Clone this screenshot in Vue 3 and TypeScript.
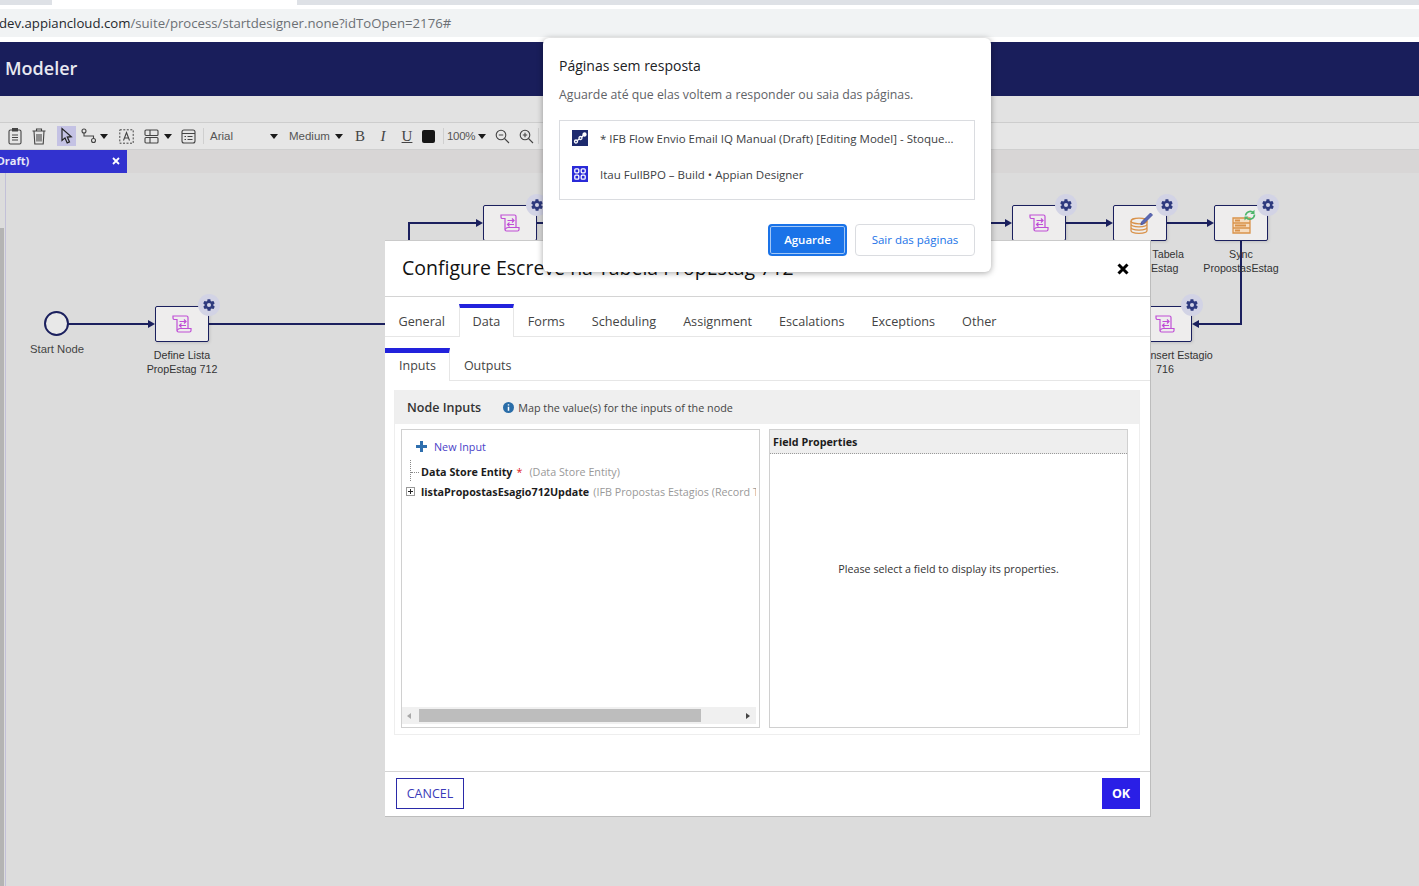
<template>
  <div class="page">
    <div class="tabstrip"><div class="active-tab"></div></div>
    <div class="urlbar">
      <span class="url"><span class="host">dev.appiancloud.com</span>/suite/process/startdesigner.none?idToOpen=2176#</span>
    </div>

    <header class="appbar"><span>Modeler</span></header>
    <div class="band"></div>

    <div class="toolbar">
      <span class="tool t-clip">
        <svg width="16" height="18" viewBox="0 0 16 18"><rect x="2" y="3" width="12" height="14" rx="1.5" class="ic"/><rect x="5" y="1" width="6" height="3.5" fill="#444"/><path d="M5 8h6M5 10.5h6M5 13h6" class="ic"/></svg>
      </span>
      <span class="tool t-trash">
        <svg width="16" height="18" viewBox="0 0 16 18"><path d="M1.5 4h13M5.5 4V2h5v2M3 4l.8 13h8.4L13 4M6 7v7.5M8 7v7.5M10 7v7.5" class="ic"/></svg>
      </span>
      <span class="tool t-arrow">
        <svg width="14" height="18" viewBox="0 0 14 18"><path d="M2 1.5v12l3-2.6 2.2 5 2.3-1-2.2-4.8 4-.4z" fill="none" stroke="#222" stroke-width="1.2"/></svg>
      </span>
      <span class="tool t-conn">
        <svg width="16" height="16" viewBox="0 0 16 16"><circle cx="3" cy="3" r="2" class="ic"/><circle cx="12.5" cy="12.5" r="2" class="ic"/><path d="M3 5v3h9.500v2.500" class="ic"/></svg>
      </span>
      <span class="caret t-c1"></span>
      <span class="tool t-text">
        <svg width="15" height="15" viewBox="0 0 15 15"><rect x=".8" y=".8" width="13.400" height="13.400" fill="none" stroke="#444" stroke-dasharray="2 1.500"/><path d="M4.500 11.500 7.500 3.500l3 8M5.500 9h4" class="ic"/></svg>
      </span>
      <span class="tool t-layout">
        <svg width="15" height="15" viewBox="0 0 15 15"><rect x="1" y="1" width="13" height="5.500" rx="1" class="ic"/><rect x="1" y="8.500" width="13" height="5.500" rx="1" class="ic"/><path d="M6 1v5.500M6 8.500V14" class="ic"/></svg>
      </span>
      <span class="caret t-c2"></span>
      <span class="tool t-list">
        <svg width="15" height="15" viewBox="0 0 15 15"><rect x="1" y="1" width="13" height="13" rx="2" class="ic"/><path d="M1 4.500h13M3.500 7.500h1.500M6.500 7.500h5M3.500 10.500h1.500M6.500 10.500h5" class="ic"/></svg>
      </span>
      <span class="sep s1"></span>
      <span class="label font-name">Arial</span>
      <span class="caret t-c3"></span>
      <span class="label font-size">Medium</span>
      <span class="caret t-c4"></span>
      <span class="fmt f-b">B</span>
      <span class="fmt f-i">I</span>
      <span class="fmt f-u">U</span>
      <span class="swatch"></span>
      <span class="sep s2"></span>
      <span class="label zoom">100%</span>
      <span class="caret t-c5"></span>
      <span class="tool t-zo">
        <svg width="15" height="15" viewBox="0 0 15 15"><circle cx="6" cy="6" r="4.800" class="ic"/><path d="M3.800 6h4.400M9.500 9.500l4.500 4.500" class="ic"/></svg>
      </span>
      <span class="tool t-zi">
        <svg width="15" height="15" viewBox="0 0 15 15"><circle cx="6" cy="6" r="4.800" class="ic"/><path d="M3.800 6h4.400M6 3.800v4.400M9.500 9.500l4.500 4.500" class="ic"/></svg>
      </span>
      <span class="sep s3"></span>
    </div>

    <div class="docbar">
      <div class="doctab">
        <span class="doctab-name">(Draft)</span>
        <svg class="doctab-x" width="8" height="8" viewBox="0 0 8 8"><path d="M1 1l6 6M7 1 1 7" stroke="#fff" stroke-width="1.800"/></svg>
      </div>
    </div>

    <main class="canvas">
      <div class="gutter"></div>
      <div class="gutter-thumb"></div>

      <svg class="wires" width="1419" height="713" viewBox="0 173 1419 713">
        <g fill="none" stroke="#1b205e" stroke-width="2">
          <path d="M68 324H150"/>
          <path d="M209 324H385"/>
          <path d="M409 240V223H478"/>
          <path d="M537 223H1007"/>
          <path d="M1066 223H1108"/>
          <path d="M1167 223H1209"/>
          <path d="M1241 241V324H1198"/>
        </g>
        <g fill="#1b205e">
          <path d="M155 324l-7-4v8z"/>
          <path d="M483 223l-7-4v8z"/>
          <path d="M1012 223l-7-4v8z"/>
          <path d="M1113 223l-7-4v8z"/>
          <path d="M1214 223l-7-4v8z"/>
          <path d="M1192 324l7-4v8z"/>
        </g>
      </svg>

      <div class="start" :style="place(44, 311)"></div>
      <div class="node-label start-label" :style="place(17, 342)">Start Node</div>

      <div v-for="n in nodes" :key="n.x + '-' + n.y" class="node" :style="place(n.x, n.y)">
        <svg v-if="n.icon === 'script'" width="20" height="18" viewBox="0 0 20 18" fill="none" stroke="#c04fd6" stroke-width="1.200">
          <path d="M1 1h13.500A1.500 1.500 0 0 1 16 2.500V13.500h3v2a1.500 1.500 0 0 1-1.500 1.500H6.500A1.500 1.500 0 0 1 5 15.500V4.500H2A1.500 1.500 0 0 1 1 3z"/>
          <path d="M5 15.500c1-1.500 2-2 3-2h11M7.500 6.500h6.500M12 4.500l2 2-2 2M14 10.500H7.500M9.500 8.500l-2 2 2 2"/>
        </svg>
        <svg v-else-if="n.icon === 'db'" class="db-icon" width="23" height="23" viewBox="0 0 23 23" fill="none" stroke="#d9924a" stroke-width="1.300">
          <ellipse cx="9" cy="10" rx="8" ry="2.800"/>
          <path d="M1 10v9.500c0 1.600 3.600 2.800 8 2.800s8-1.200 8-2.800V10M1 13c0 1.600 3.600 2.800 8 2.800s8-1.200 8-2.800M1 16.300c0 1.600 3.600 2.800 8 2.800s8-1.200 8-2.800"/>
          <path d="M11.500 11l9-9 2 2-9 9-2.700.7z" fill="#5a68b4" stroke="#3f4c98" stroke-width=".8"/>
        </svg>
        <svg v-else class="sync-icon" width="24" height="25" viewBox="0 0 24 25" fill="none">
          <path d="M1 9h17v5H1zM1 14h17v5H1zM1 19h17v5H1z" fill="#f5dcc0" stroke="#d9924a" stroke-width="1.300"/>
          <path d="M3 11.500h5M3 16.500h11M3 21.500h5" stroke="#d9924a" stroke-width="2"/>
          <path d="M13.500 6.500a4.800 4.800 0 0 1 8-2.800M22.500 5.500a4.800 4.800 0 0 1-8 3.500" stroke="#4db56a" stroke-width="1.600"/>
          <path d="M22.500.8v4.200h-4.200zM12.500 11.500V7.500h4z" fill="#4db56a"/>
        </svg>
        <span class="gear" :class="{ upper: n.y < 300 }">
          <svg width="14" height="14" viewBox="0 0 24 24"><path fill="#2e3a7e" d="M19.400 13c.1-.3.100-.7.100-1s0-.7-.1-1l2.100-1.600c.2-.1.2-.4.100-.6l-2-3.500c-.1-.2-.4-.3-.6-.2l-2.500 1c-.5-.4-1.100-.7-1.700-1l-.4-2.600c0-.3-.2-.5-.5-.5h-4c-.3 0-.5.200-.5.500l-.4 2.600c-.6.300-1.200.6-1.700 1l-2.500-1c-.2-.1-.5 0-.6.200l-2 3.500c-.1.200-.1.500.1.600L4.600 11c-.1.300-.1.700-.1 1s0 .7.100 1l-2.100 1.600c-.2.100-.2.400-.1.600l2 3.500c.1.200.4.300.6.200l2.500-1c.5.400 1.100.7 1.700 1l.4 2.600c0 .3.200.5.500.5h4c.3 0 .5-.2.500-.5l.4-2.600c.6-.3 1.200-.6 1.700-1l2.500 1c.2.100.5 0 .6-.2l2-3.500c.1-.2.100-.5-.1-.6zM12 15.500a3.500 3.500 0 1 1 0-7 3.500 3.500 0 0 1 0 7z"/></svg>
        </span>
        <div class="node-label">
          <div v-for="line in n.label" :key="line">{{ line }}</div>
        </div>
      </div>
    </main>

    <!-- process node properties -->
    <section class="dialog">
      <div class="dialog-head">
        <h1>Configure Escreve na Tabela PropEstag 712</h1>
        <svg width="12" height="12" viewBox="0 0 12 12"><path d="M1.500 1.500l9 9M10.500 1.500l-9 9" stroke="#000" stroke-width="3"/></svg>
      </div>

      <nav class="tabs">
        <span v-for="t in tabs" :key="t" class="tab" :class="{ on: t === 'Data' }">{{ t }}</span>
      </nav>
      <nav class="tabs sub">
        <span class="tab on">Inputs</span>
        <span class="tab">Outputs</span>
      </nav>

      <div class="panel">
        <div class="panel-head">
          <strong>Node Inputs</strong>
          <svg width="11" height="11" viewBox="0 0 11 11"><circle cx="5.500" cy="5.500" r="5.500" fill="#2a6da8"/><path d="M5.500 2.200v1.400M5.500 4.800v4" stroke="#fff" stroke-width="1.500"/></svg>
          <span>Map the value(s) for the inputs of the node</span>
        </div>
        <div class="panel-body">
          <div class="tree-box">
            <div class="tree">
              <div class="new-input">
                <svg width="11" height="11" viewBox="0 0 11 11"><path d="M5.500 0v11M0 5.500h11" stroke="#2f6fae" stroke-width="3"/></svg>
                <span>New Input</span>
              </div>
              <div class="row first">
                <b>Data Store Entity</b><i class="req">*</i><span class="type gap">(Data Store Entity)</span>
              </div>
              <div class="row second">
                <span class="expander"></span>
                <b>listaPropostasEsagio712Update</b><span class="type">(IFB Propostas Estagios (Record Type))</span>
              </div>
            </div>
            <div class="hscroll">
              <span class="arrow left"></span>
              <span class="thumb"></span>
              <span class="arrow right"></span>
            </div>
          </div>

          <div class="props-box">
            <div class="props-head">Field Properties</div>
            <div class="props-empty">Please select a field to display its properties.</div>
          </div>
        </div>
      </div>

      <footer class="dialog-foot">
        <button class="btn cancel">CANCEL</button>
        <button class="btn ok">OK</button>
      </footer>
    </section>

    <!-- browser's own unresponsive pages prompt -->
    <aside class="prompt">
      <h2>Páginas sem resposta</h2>
      <p>Aguarde até que elas voltem a responder ou saia das páginas.</p>
      <ul>
        <li>
          <span class="fav navy">
            <svg width="16" height="16" viewBox="0 0 16 16" fill="none" stroke="#fff" stroke-width="1.300"><circle cx="4" cy="11.500" r="1.500"/><circle cx="8.500" cy="8" r="1.500"/><circle cx="12.500" cy="4.500" r="1.500" fill="#fff"/><path d="M5.300 10.500l2-1.500M9.800 7l1.500-1.500"/></svg>
          </span>
          * IFB Flow Envio Email IQ Manual (Draft) [Editing Model] - Stoque...
        </li>
        <li>
          <span class="fav blue">
            <svg width="16" height="16" viewBox="0 0 16 16" fill="none" stroke="#fff" stroke-width="1.300"><rect x="2.800" y="2.800" width="4" height="4" rx="1"/><rect x="9.200" y="2.800" width="4" height="4" rx="1"/><rect x="2.800" y="9.200" width="4" height="4" rx="1"/><rect x="9.200" y="9.200" width="4" height="4" rx="1"/></svg>
          </span>
          Itau FullBPO – Build • Appian Designer
        </li>
      </ul>
      <div class="prompt-actions">
        <button class="wait">Aguarde</button>
        <button class="leave">Sair das páginas</button>
      </div>
    </aside>
  </div>
</template>

<script setup lang="ts">
interface FlowNode {
  x: number
  y: number
  icon: 'script' | 'db' | 'sync'
  label: string[]
}

// coordinates are page pixels, the canvas starts under the document bar
const CANVAS_TOP = 173

const nodes: FlowNode[] = [
  { x: 155, y: 306, icon: 'script', label: ['Define Lista', 'PropEstag 712'] },
  { x: 483, y: 205, icon: 'script', label: [] },
  { x: 1012, y: 205, icon: 'script', label: [] },
  { x: 1113, y: 205, icon: 'db', label: ['Escreve na Tabela', '7120 PropEstag'] },
  { x: 1214, y: 205, icon: 'sync', label: ['Sync', 'PropostasEstag'] },
  { x: 1138, y: 306, icon: 'script', label: ['Script Insert Estagio', '716'] }
]

const tabs = ['General', 'Data', 'Forms', 'Scheduling', 'Assignment', 'Escalations', 'Exceptions', 'Other']

const place = (x: number, y: number) => ({ left: `${x}px`, top: `${y - CANVAS_TOP}px` })
</script>

<style>
html, body {
  margin: 0;
  background: #dcdcdc;
}
</style>

<style scoped>
.page {
  position: relative;
  width: 1419px;
  height: 886px;
  overflow: hidden;
  display: flex;
  flex-direction: column;
  background: #fff;
  font-family: "Open Sans", "Noto Sans", sans-serif;
  color: #333;
}

/* Browser chrome */
.tabstrip {
  height: 5px;
  background: #dee1e6;
  padding-left: 52px;
  flex-shrink: 0;
}
.active-tab {
  width: 245px;
  height: 5px;
  background: #fff;
}
.urlbar {
  height: 28px;
  margin-top: 4px;
  background: #f1f3f4;
  display: flex;
  align-items: center;
  flex-shrink: 0;
}
.url {
  margin-left: -1px;
  font-size: 13.2px;
  color: #6c7074;
  white-space: nowrap;
}
.host {
  color: #25282c;
}

.appbar {
  height: 54px;
  box-sizing: border-box;
  margin-top: 5px;
  background: #191e5b;
  color: #e8e8f0;
  font-size: 18px;
  font-weight: 600;
  padding: 0 0 2px 5px;
  display: flex;
  align-items: center;
  flex-shrink: 0;
}
.band {
  height: 26px;
  background: #e2e2e2;
  flex-shrink: 0;
}

/* Toolbar */
.toolbar {
  height: 26px;
  background: #e6e6e6;
  border-top: 1px solid #cdcdcd;
  border-bottom: 1px solid #cfcfcf;
  display: flex;
  align-items: center;
  flex-shrink: 0;
}
.ic {
  fill: none;
  stroke: #444;
  stroke-width: 1.1;
}
.tool {
  display: flex;
  align-items: center;
  justify-content: center;
}
.t-clip { margin-left: 7px; }
.t-trash { margin-left: 8px; }
.t-arrow {
  margin-left: 10px;
  width: 19px;
  height: 20px;
  background: #c4c2e4;
}
.t-conn { margin-left: 5px; }
.caret {
  width: 0;
  height: 0;
  border-left: 4.500px solid transparent;
  border-right: 4.500px solid transparent;
  border-top: 5px solid #1a1a1a;
}
.t-c1 { margin-left: 3px; }
.t-text { margin-left: 11px; }
.t-layout { margin-left: 10px; }
.t-c2 { margin-left: 5px; }
.t-list { margin-left: 9px; }
.sep {
  width: 1px;
  height: 16px;
  background: #cfcfcf;
}
.s1 { margin-left: 7px; }
.label {
  font-family: "Liberation Sans", Arial, sans-serif;
  font-size: 11.500px;
  color: #555;
}
.font-name { margin-left: 6px; width: 60px; }
.t-c3 { margin-right: 11px; }
.font-size { width: 46px; }
.fmt {
  font-family: "Liberation Serif", serif;
  font-size: 15px;
  color: #444;
  width: 12px;
  text-align: center;
}
.f-b { margin-left: 11px; }
.f-i { margin-left: 11px; font-style: italic; }
.f-u { margin-left: 12px; text-decoration: underline; }
.swatch {
  width: 13px;
  height: 13px;
  margin-left: 9px;
  border-radius: 2px;
  background: #161616;
}
.s2 { margin-left: 8px; }
.zoom { margin-left: 3px; width: 30px; letter-spacing: -.3px; }
.t-c5 { margin-left: 1px; }
.t-zo { margin-left: 9px; }
.t-zi { margin-left: 9px; }
.s3 { margin-left: 4px; }

/* Document tab */
.docbar {
  height: 23px;
  background: #d8d6d6;
  flex-shrink: 0;
}
.doctab {
  width: 127px;
  height: 23px;
  box-sizing: border-box;
  padding-bottom: 2px;
  background: #3232cf;
  color: #e8e8f8;
  display: flex;
  align-items: center;
  overflow: hidden;
}
.doctab-name {
  margin-left: -7px;
  font-size: 11px;
  font-weight: 700;
}
.doctab-x {
  margin-left: auto;
  margin-right: 7px;
}

/* Canvas */
.canvas {
  position: relative;
  flex: 1;
  background: #dcdcdc;
}
.gutter {
  position: absolute;
  left: 5px;
  top: 0;
  bottom: 0;
  width: 1px;
  background: #c2c0d8;
}
.gutter-thumb {
  position: absolute;
  left: 0;
  top: 55px;
  bottom: 0;
  width: 4px;
  background: #b4b4b4;
}
.wires {
  position: absolute;
  left: 0;
  top: 0;
}
.start {
  position: absolute;
  width: 21px;
  height: 21px;
  border: 2px solid #1b205e;
  border-radius: 50%;
  background: #e8e8e8;
}
.node {
  position: absolute;
  width: 54px;
  height: 36px;
  box-sizing: border-box;
  border: 1.500px solid #1b205e;
  border-radius: 2px;
  background: #eeeded;
  display: flex;
  align-items: center;
  justify-content: center;
  box-shadow: 1px 1px 3px rgba(0, 0, 0, .12);
}
.db-icon {
  margin-top: -2px;
  margin-left: 3px;
}
.sync-icon {
  margin-top: -4px;
  margin-left: 6px;
}
.gear {
  position: absolute;
  right: -12px;
  top: -13px;
  width: 22px;
  height: 22px;
  border-radius: 50%;
  background: #d2d3e5;
  display: flex;
  align-items: center;
  justify-content: center;
}
.gear.upper {
  top: -12px;
}
.node-label {
  position: absolute;
  top: 41px;
  left: -40px;
  right: -40px;
  font-family: "Liberation Sans", Arial, sans-serif;
  font-size: 10.700px;
  line-height: 14px;
  text-align: center;
  color: #333;
  white-space: nowrap;
}
.start-label {
  top: 0;
  left: auto;
  right: auto;
  width: 80px;
  font-size: 11.300px;
  color: #444;
}

/* Node properties dialog */
.dialog {
  position: absolute;
  left: 385px;
  top: 240px;
  width: 766px;
  height: 577px;
  box-sizing: border-box;
  background: #fff;
  border-top: 1px solid #cacaca;
  border-right: 1px solid #bdbdbd;
  border-bottom: 1px solid #bdbdbd;
  display: flex;
  flex-direction: column;
}
.dialog-head {
  height: 56px;
  box-sizing: border-box;
  border-bottom: 1px solid #d4d4d4;
  display: flex;
  align-items: center;
  justify-content: space-between;
  padding: 0 21px 1px 17px;
  flex-shrink: 0;
}
.dialog-head h1 {
  margin: 0 0 1px;
  font-size: 19.500px;
  font-weight: 400;
  color: #111;
  white-space: nowrap;
}
.dialog-head svg {
  margin-top: 2px;
}
.tabs {
  display: flex;
  height: 33px;
  margin-top: 7px;
  box-sizing: border-box;
  border-bottom: 1px solid #e6e6e6;
  flex-shrink: 0;
  font-size: 12.650px;
  color: #444;
}
.tab {
  padding: 1px 13.500px 0;
  line-height: 24px;
  height: 32px;
  box-sizing: border-box;
  border-top: 4px solid transparent;
  white-space: nowrap;
}
.tab.on {
  height: 33px;
  background: #fff;
  border-top-color: #2222dc;
  border-left: 1px solid #e6e6e6;
  border-right: 1px solid #e6e6e6;
  padding: 1px 13px 0;
}
.sub {
  margin-top: 11px;
  font-size: 12.500px;
}
.sub .tab.on {
  border-top-width: 5px;
  border-left: 0;
  padding: 1px 13.500px 0 14px;
}
.sub .tab:not(.on) {
  padding-top: 2px;
}
.panel {
  margin: 9px 10px 0 9px;
  height: 345px;
  box-sizing: border-box;
  border: 1px solid #eee;
  border-top: 0;
  display: flex;
  flex-direction: column;
}
.panel-head {
  height: 34px;
  background: #efefef;
  display: flex;
  align-items: center;
  font-size: 10.800px;
  color: #444;
  padding-left: 12px;
  flex-shrink: 0;
}
.panel-head strong {
  font-size: 12.500px;
  font-weight: 600;
  color: #333;
  margin-right: 22px;
}
.panel-head svg {
  margin-right: 4px;
}
.panel-body {
  display: flex;
  gap: 9px;
  padding: 5px 11px 0 6px;
}
.tree-box,
.props-box {
  width: 359px;
  height: 299px;
  box-sizing: border-box;
  border: 1px solid #d0d0d0;
  display: flex;
  flex-direction: column;
  font-size: 10.750px;
}
.tree {
  flex: 1;
  overflow: hidden;
  position: relative;
  padding-top: 9px;
  margin-right: 3px;
}
.new-input {
  display: flex;
  align-items: center;
  gap: 7px;
  padding-left: 14px;
  height: 15px;
  color: #4a3fc8;
}
.row {
  position: relative;
  padding-left: 19px;
  height: 20px;
  line-height: 20px;
  white-space: nowrap;
}
.row.first {
  margin-top: 8px;
}
.row b {
  font-weight: 700;
  color: #1c1c1c;
}
.row.first::before {
  content: "";
  position: absolute;
  left: 8px;
  top: -2px;
  height: 21px;
  border-left: 1px dotted #888;
}
.row.first::after {
  content: "";
  position: absolute;
  left: 9px;
  top: 10px;
  width: 8px;
  border-top: 1px dotted #888;
}
.req {
  color: #e02020;
  font-style: normal;
  margin-left: 4px;
}
.type {
  color: #999;
  margin-left: 4px;
}
.type.gap {
  margin-left: 7px;
}
.expander {
  position: absolute;
  left: 4px;
  top: 5px;
  width: 9px;
  height: 9px;
  box-sizing: border-box;
  border: 1px solid #999;
  background:
    linear-gradient(#222, #222) center / 5px 1px no-repeat,
    linear-gradient(#222, #222) center / 1px 5px no-repeat,
    #fff;
}
.hscroll {
  height: 17px;
  margin: 0 3px 3px 0;
  background: #f0f0f0;
  display: flex;
  align-items: center;
  flex-shrink: 0;
}
.thumb {
  width: 282px;
  height: 13px;
  margin-left: 8px;
  background: #bdbdbd;
}
.arrow {
  width: 0;
  height: 0;
  border-top: 3.500px solid transparent;
  border-bottom: 3.500px solid transparent;
}
.arrow.left {
  margin-left: 5px;
  border-right: 4px solid #a8a8a8;
}
.arrow.right {
  margin-left: 45px;
  border-left: 4px solid #444;
}
.props-head {
  height: 23px;
  line-height: 24px;
  padding-left: 3px;
  background: #eee;
  border-bottom: 1px dotted #999;
  font-weight: 700;
  color: #1c1c1c;
  flex-shrink: 0;
}
.props-empty {
  flex: 1;
  display: flex;
  align-items: center;
  justify-content: center;
  padding-bottom: 43px;
  color: #333;
}
.dialog-foot {
  margin-top: auto;
  height: 45px;
  box-sizing: border-box;
  border-top: 1px solid #d4d4d4;
  display: flex;
  justify-content: space-between;
  padding: 6px 10px 0 11px;
  flex-shrink: 0;
}
.btn {
  height: 31px;
  box-sizing: border-box;
  font-family: inherit;
  font-size: 12.500px;
  padding: 0;
}
.cancel {
  width: 68px;
  background: #fff;
  border: 1px solid #2a2aa8;
  color: #3a3ab8;
}
.ok {
  width: 38px;
  background: #2a1fe6;
  border: 0;
  color: #fff;
  font-weight: 700;
}

/* Browser prompt */
.prompt {
  position: absolute;
  left: 543px;
  top: 38px;
  width: 448px;
  height: 234px;
  box-sizing: border-box;
  padding: 18px 16px 16px;
  background: #fff;
  border-radius: 6px;
  box-shadow: 0 1px 6px rgba(0, 0, 0, .35);
  display: flex;
  flex-direction: column;
}
.prompt h2 {
  margin: 0;
  font-size: 14px;
  font-weight: 400;
  line-height: 20px;
  color: #202124;
}
.prompt p {
  margin: 10px 0 0;
  font-size: 12.300px;
  line-height: 18px;
  color: #5f6368;
}
.prompt ul {
  list-style: none;
  margin: 16px 0 0;
  padding: 0 12px 8px;
  height: 80px;
  box-sizing: border-box;
  border: 1px solid #dadce0;
  font-size: 11.500px;
  color: #3c4043;
  display: flex;
  flex-direction: column;
  justify-content: center;
  gap: 20px;
}
.prompt li {
  display: flex;
  align-items: center;
  gap: 12px;
  height: 16px;
  white-space: nowrap;
}
.fav {
  width: 16px;
  height: 16px;
  display: block;
  flex-shrink: 0;
}
.fav.navy { background: #1d2a6e; }
.fav.blue { background: #2a2ad8; }
.prompt-actions {
  display: flex;
  justify-content: flex-end;
  gap: 8px;
  margin-top: 24px;
}
.prompt-actions button {
  height: 32px;
  box-sizing: border-box;
  border-radius: 4px;
  font-family: inherit;
  font-size: 11.500px;
  padding: 0 0 2px;
}
.wait {
  width: 79px;
  background: #1a73e8;
  border: 2px solid #1a73e8;
  box-shadow: inset 0 0 0 1px rgba(255, 255, 255, .6);
  color: #fff;
  font-weight: 600;
}
.leave {
  width: 120px;
  background: #fff;
  border: 1px solid #dadce0;
  color: #1a73e8;
}
</style>
